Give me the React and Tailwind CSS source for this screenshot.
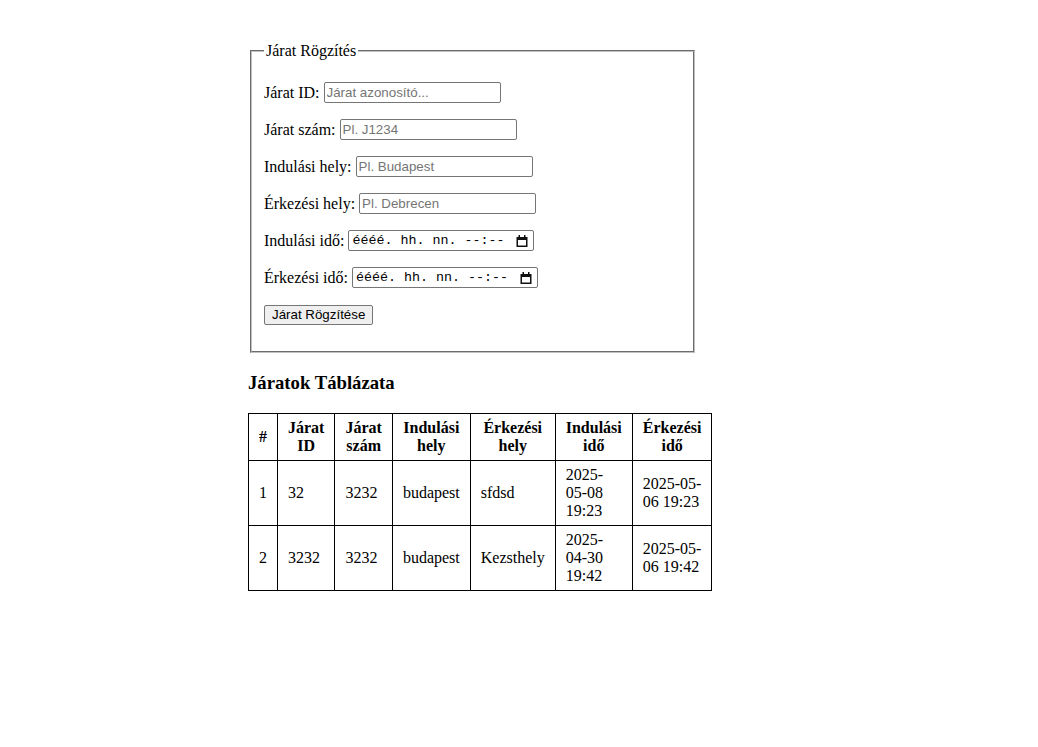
import React from 'react';

const serif = "font-['Liberation_Serif','Times_New_Roman',serif]";
const sans = "font-['Liberation_Sans',Arial,sans-serif]";

const textFields = [
  { label: 'Járat ID:', placeholder: 'Járat azonosító...' },
  { label: 'Járat szám:', placeholder: 'Pl. J1234' },
  { label: 'Indulási hely:', placeholder: 'Pl. Budapest' },
  { label: 'Érkezési hely:', placeholder: 'Pl. Debrecen' },
];

const dateFields = ['Indulási idő:', 'Érkezési idő:'];

const rows = [
  { n: 1, id: '32', num: '3232', from: 'budapest', to: 'sfdsd', dep: '2025-05-08 19:23', arr: '2025-05-06 19:23' },
  { n: 2, id: '3232', num: '3232', from: 'budapest', to: 'Kezsthely', dep: '2025-04-30 19:42', arr: '2025-05-06 19:42' },
];

const CalendarIcon = () => (
  <svg width="12" height="12" viewBox="0 0 12 12" className="shrink-0">
    <path d="M3.25 0v2.5M8.75 0v2.5" stroke="#111" strokeWidth="1.5" />
    <rect x="1.25" y="2.75" width="9.5" height="8.5" fill="none" stroke="#111" strokeWidth="1.5" />
    <rect x="1" y="2" width="10" height="3" fill="#111" />
  </svg>
);

const DateBox = () => (
  <div className="flex h-[21px] w-[186px] items-center justify-between rounded-[2px] border border-[#767676] bg-white pl-[3px] pr-[5px]">
    <span className="font-['Liberation_Mono','Courier_New',monospace] text-[13.33px] leading-none text-black">
      éééé. hh. nn. --:--
    </span>
    <CalendarIcon />
  </div>
);

export default function App() {
  return (
    <div className={`min-h-screen bg-white pl-[248px] pt-[42px] text-black ${serif}`}>
      <div className="w-[450px]">
        <fieldset className="mx-[2px] w-[445px] border-2 border-[#c0c0c0] px-[12px] pb-[26px] [border-style:groove]">
          <legend className="px-[2px] text-[16px] leading-[18px]">Járat Rögzítés</legend>
          <div className="mt-[22px] flex flex-col gap-[16px]">
            {textFields.map((f) => (
              <div key={f.label} className="flex h-[21px] items-center gap-[4px] text-[16px]">
                <span>{f.label}</span>
                <input
                  type="text"
                  placeholder={f.placeholder}
                  className={`h-[21px] w-[177px] rounded-[2px] border border-[#767676] bg-white px-[2px] py-[1px] text-[13.33px] placeholder:text-[#757575] ${sans}`}
                />
              </div>
            ))}
            {dateFields.map((label) => (
              <div key={label} className="flex h-[21px] items-center gap-[4px] text-[16px]">
                <span>{label}</span>
                <DateBox />
              </div>
            ))}
            <div className="flex h-[21px] items-center">
              <button
                type="button"
                className={`h-[20px] rounded-[2px] border border-[#767676] bg-[#efefef] px-[7px] text-[13.33px] leading-none ${sans}`}
              >
                Járat Rögzítése
              </button>
            </div>
          </div>
        </fieldset>

        <h3 className="mt-[19px] text-[18.72px] font-bold leading-[21px]">Járatok Táblázata</h3>

        <table className="mt-[20px] border-collapse text-[16px] leading-[18px]">
          <thead>
            <tr>
              {['#', 'Járat ID', 'Járat szám', 'Indulási hely', 'Érkezési hely', 'Indulási idő', 'Érkezési idő'].map((h) => (
                <th key={h} className="border border-black px-[10px] py-[5px] text-center align-middle font-bold">
                  {h}
                </th>
              ))}
            </tr>
          </thead>
          <tbody>
            {rows.map((r) => (
              <tr key={r.n}>
                {[r.n, r.id, r.num, r.from, r.to, r.dep, r.arr].map((v, i) => (
                  <td key={i} className="border border-black px-[10px] py-[5px] text-left align-middle">
                    {v}
                  </td>
                ))}
              </tr>
            ))}
          </tbody>
        </table>
      </div>
    </div>
  );
}
